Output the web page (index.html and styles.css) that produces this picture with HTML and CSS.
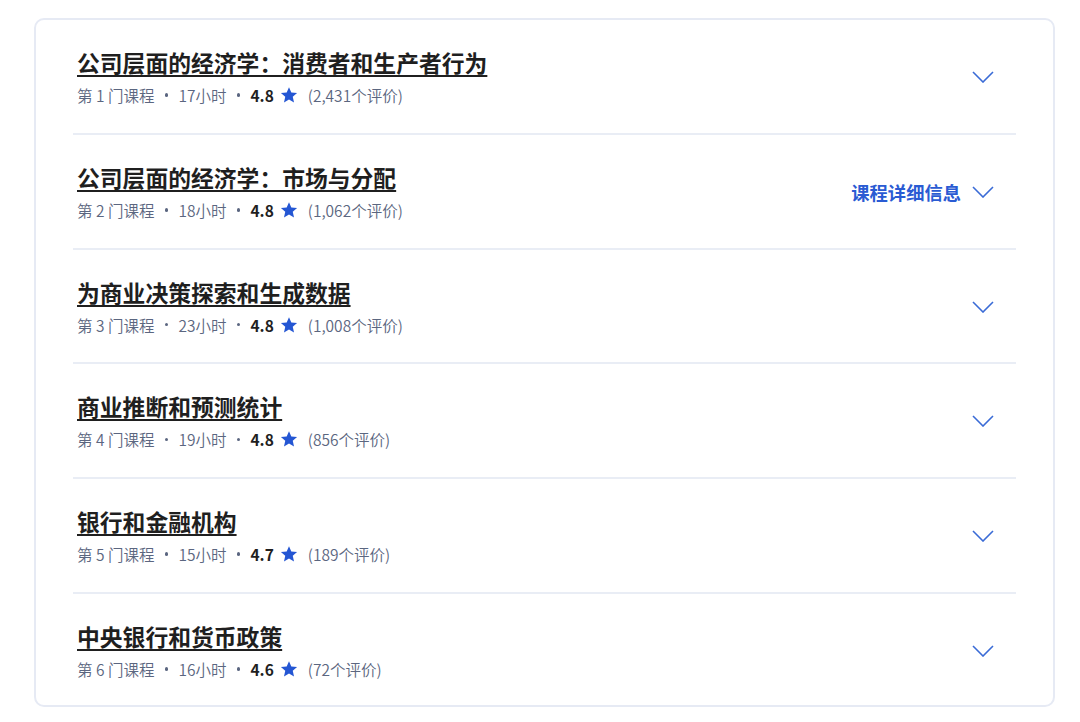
FILE: index.html
```html
<!DOCTYPE html>
<html lang="zh-CN">
<head>
<meta charset="utf-8">
<title>课程</title>
<link rel="stylesheet" href="styles.css">
</head>
<body>
<div class="card">
  <div class="row">
    <div class="info">
      <a class="title" href="#">公司层面的经济学：消费者和生产者行为</a>
      <div class="meta"><span>第 1 门课程</span><span class="dot"></span><span>17小时</span><span class="dot"></span><span class="rating">4.8</span><svg class="star" viewBox="0 0 24 24"><path d="M12 1.5l3.1 7.1 7.7.7-5.8 5.1 1.7 7.6L12 18l-6.7 4 1.7-7.6L1.2 9.3l7.7-.7z"/></svg><span class="count">(2,431个评价)</span></div>
    </div>
    <div class="toggle"><svg class="chev" viewBox="0 0 22 12"><path d="M1 1l10 10L21 1"/></svg></div>
  </div>
  <div class="row">
    <div class="info">
      <a class="title" href="#">公司层面的经济学：市场与分配</a>
      <div class="meta"><span>第 2 门课程</span><span class="dot"></span><span>18小时</span><span class="dot"></span><span class="rating">4.8</span><svg class="star" viewBox="0 0 24 24"><path d="M12 1.5l3.1 7.1 7.7.7-5.8 5.1 1.7 7.6L12 18l-6.7 4 1.7-7.6L1.2 9.3l7.7-.7z"/></svg><span class="count">(1,062个评价)</span></div>
    </div>
    <div class="toggle"><span class="details">课程详细信息</span><svg class="chev" viewBox="0 0 22 12"><path d="M1 1l10 10L21 1"/></svg></div>
  </div>
  <div class="row">
    <div class="info">
      <a class="title" href="#">为商业决策探索和生成数据</a>
      <div class="meta"><span>第 3 门课程</span><span class="dot"></span><span>23小时</span><span class="dot"></span><span class="rating">4.8</span><svg class="star" viewBox="0 0 24 24"><path d="M12 1.5l3.1 7.1 7.7.7-5.8 5.1 1.7 7.6L12 18l-6.7 4 1.7-7.6L1.2 9.3l7.7-.7z"/></svg><span class="count">(1,008个评价)</span></div>
    </div>
    <div class="toggle"><svg class="chev" viewBox="0 0 22 12"><path d="M1 1l10 10L21 1"/></svg></div>
  </div>
  <div class="row">
    <div class="info">
      <a class="title" href="#">商业推断和预测统计</a>
      <div class="meta"><span>第 4 门课程</span><span class="dot"></span><span>19小时</span><span class="dot"></span><span class="rating">4.8</span><svg class="star" viewBox="0 0 24 24"><path d="M12 1.5l3.1 7.1 7.7.7-5.8 5.1 1.7 7.6L12 18l-6.7 4 1.7-7.6L1.2 9.3l7.7-.7z"/></svg><span class="count">(856个评价)</span></div>
    </div>
    <div class="toggle"><svg class="chev" viewBox="0 0 22 12"><path d="M1 1l10 10L21 1"/></svg></div>
  </div>
  <div class="row">
    <div class="info">
      <a class="title" href="#">银行和金融机构</a>
      <div class="meta"><span>第 5 门课程</span><span class="dot"></span><span>15小时</span><span class="dot"></span><span class="rating">4.7</span><svg class="star" viewBox="0 0 24 24"><path d="M12 1.5l3.1 7.1 7.7.7-5.8 5.1 1.7 7.6L12 18l-6.7 4 1.7-7.6L1.2 9.3l7.7-.7z"/></svg><span class="count">(189个评价)</span></div>
    </div>
    <div class="toggle"><svg class="chev" viewBox="0 0 22 12"><path d="M1 1l10 10L21 1"/></svg></div>
  </div>
  <div class="row last">
    <div class="info">
      <a class="title" href="#">中央银行和货币政策</a>
      <div class="meta"><span>第 6 门课程</span><span class="dot"></span><span>16小时</span><span class="dot"></span><span class="rating">4.6</span><svg class="star" viewBox="0 0 24 24"><path d="M12 1.5l3.1 7.1 7.7.7-5.8 5.1 1.7 7.6L12 18l-6.7 4 1.7-7.6L1.2 9.3l7.7-.7z"/></svg><span class="count">(72个评价)</span></div>
    </div>
    <div class="toggle"><svg class="chev" viewBox="0 0 22 12"><path d="M1 1l10 10L21 1"/></svg></div>
  </div>
</div>
</body>
</html>
```
FILE: styles.css
```css
* { box-sizing: border-box; }
html, body { margin: 0; padding: 0; background: #fff; }
body {
  font-family: "Noto Sans CJK SC", "Noto Sans", sans-serif;
  color: #1f1f1f;
}
.card {
  margin: 18px 0 0 34px;
  width: 1021px;
  border: 2px solid #e6eaf4;
  border-radius: 10px;
  padding: 0 37px;
}
.row {
  display: flex;
  align-items: center;
  justify-content: space-between;
  padding: 27px 22px 25.75px 4px;
  border-bottom: 2px solid #e9edf5;
}
.row.last { border-bottom: none; padding-bottom: 24px; }
.info { display: flex; flex-direction: column; }
.title {
  font-size: 22.8px;
  line-height: 32px;
  font-weight: 700;
  color: #1f1f1f;
  text-decoration: underline;
  text-decoration-thickness: 2px;
  text-underline-offset: 3px;
}
.meta {
  margin-top: 4px;
  display: flex;
  align-items: center;
  font-size: 15.5px;
  font-weight: 350;
  line-height: 24px;
  color: #5b6680;
}
.dot {
  width: 3.5px;
  height: 3.5px;
  border-radius: 50%;
  background: #5b6680;
  margin: 0 10px 0 10.5px;
}
.rating { font-weight: 700; color: #1f1f1f; }
.star { width: 18px; height: 18px; fill: #2456d3; margin: 0 10px 0 6px; }
.toggle { display: flex; align-items: center; }
.details {
  font-size: 18.3px;
  font-weight: 700;
  color: #2a5bd3;
  margin-right: 11px;
}
.chev {
  width: 22px;
  height: 12px;
  fill: none;
  stroke: #3a6bd6;
  stroke-width: 1.6;
}
```
